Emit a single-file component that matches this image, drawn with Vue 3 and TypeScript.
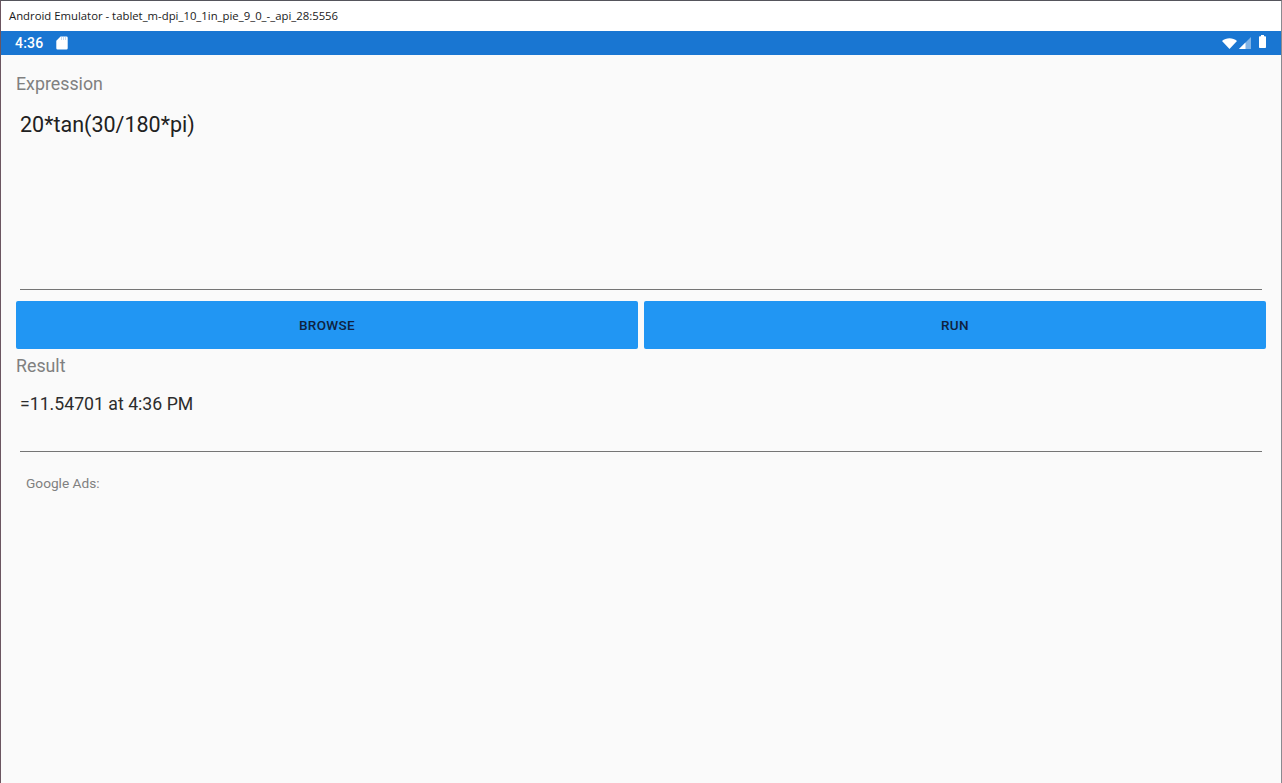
<script setup lang="ts">
const title: string = 'Android Emulator - tablet_m-dpi_10_1in_pie_9_0_-_api_28:5556'
const buttons: string[] = ['BROWSE', 'RUN']
</script>

<template>
  <div class="window">
    <header class="titlebar">{{ title }}</header>
    <div class="statusbar">
      <div class="status-left">
        <span class="clock">4:36</span>
        <svg class="sd" width="12" height="14" viewBox="0 0 12 14">
          <path d="M4.5 0.5H10.5A1.2 1.2 0 0 1 11.7 1.7V12.3A1.2 1.2 0 0 1 10.5 13.5H1.5A1.2 1.2 0 0 1 0.3 12.3V4.7Z" fill="#fff" />
          <path d="M5.5 1V4M7.5 1V4M9.5 1V4" stroke="#1976d2" stroke-width="0.5" stroke-opacity="0.5" />
        </svg>
      </div>
      <div class="status-right">
        <svg width="15" height="11" viewBox="0 0 15 11">
          <path d="M0 3C4.1 -0.6 10.9 -0.6 15 3L7.5 11Z" fill="#fff" />
        </svg>
        <svg class="signal" width="12" height="12" viewBox="0 0 12 12">
          <path d="M0 12L12 0V12Z" fill="#fff" fill-opacity="0.45" />
          <path d="M0 12L6.5 5.5V12Z" fill="#fff" />
        </svg>
        <svg class="battery" width="7" height="13" viewBox="0 0 7 13">
          <path d="M2 0H5V1.3H6.2A0.8 0.8 0 0 1 7 2.1V12.2A0.8 0.8 0 0 1 6.2 13H0.8A0.8 0.8 0 0 1 0 12.2V2.1A0.8 0.8 0 0 1 0.8 1.3H2Z" fill="#fff" />
        </svg>
      </div>
    </div>
    <main class="content">
      <label class="field-label expression-label">Expression</label>
      <div class="input expression-input">20*tan(30/180*pi)</div>
      <div class="actions">
        <button v-for="b in buttons" :key="b" class="action" type="button">{{ b }}</button>
      </div>
      <label class="field-label result-label">Result</label>
      <div class="input result-input">=11.54701 at 4:36 PM</div>
      <div class="ads">Google Ads:</div>
    </main>
  </div>
</template>

<style scoped>
.window {
  box-sizing: border-box;
  width: 1282px;
  height: 783px;
  display: flex;
  flex-direction: column;
  overflow: hidden;
  background: #fafafa;
  border-left: 1px solid #6b5560;
  border-right: 1px solid #8a8a90;
  border-top: 1px solid #55555c;
  font-family: Roboto, "Liberation Sans", sans-serif;
}
.titlebar {
  height: 30px;
  flex: none;
  box-sizing: border-box;
  padding: 7px 0 0 8px;
  background: #fff;
  color: #1a1a1a;
  font-family: "Open Sans", "Liberation Sans", sans-serif;
  font-size: 11.33px;
  line-height: 16px;
}
.statusbar {
  height: 24px;
  flex: none;
  box-sizing: border-box;
  padding: 0 15px 0 14px;
  display: flex;
  align-items: center;
  justify-content: space-between;
  background: #1976d2;
  color: #fff;
}
.status-left {
  display: flex;
  align-items: center;
  gap: 13px;
}
.clock {
  font-size: 14px;
  font-weight: 500;
  letter-spacing: 0.2px;
}
.status-right {
  display: flex;
  align-items: center;
  gap: 2px;
}
.signal {
  margin-right: 6px;
}
.battery {
  margin-bottom: 3px;
}
.content {
  flex: 1;
  display: flex;
  flex-direction: column;
  padding: 0 15px;
}
.field-label {
  color: #808080;
  font-size: 17.8px;
  line-height: 22px;
}
.expression-label {
  margin-top: 18px;
}
.input {
  margin: 0 4px;
  color: #212121;
  border-bottom: 1px solid #757575;
}
.expression-input {
  height: 195px;
  padding-top: 17px;
  box-sizing: border-box;
  font-size: 21.5px;
  line-height: 26px;
}
.actions {
  display: flex;
  gap: 6px;
  margin-top: 11px;
}
.action {
  flex: 1;
  height: 48px;
  border: 0;
  border-radius: 2px;
  background: #2196f3;
  color: #0f2240;
  font-family: inherit;
  font-size: 13.5px;
  font-weight: 500;
  letter-spacing: 0.35px;
}
.result-label {
  margin-top: 6px;
}
.result-input {
  height: 75px;
  padding-top: 16px;
  box-sizing: border-box;
  color: #2c2c2c;
  font-size: 17.7px;
  line-height: 22px;
}
.ads {
  margin: 23px 0 0 10px;
  color: #808080;
  font-size: 13.7px;
  line-height: 17px;
}
</style>

<style>
html, body {
  margin: 0;
  background: #fafafa;
}
</style>
